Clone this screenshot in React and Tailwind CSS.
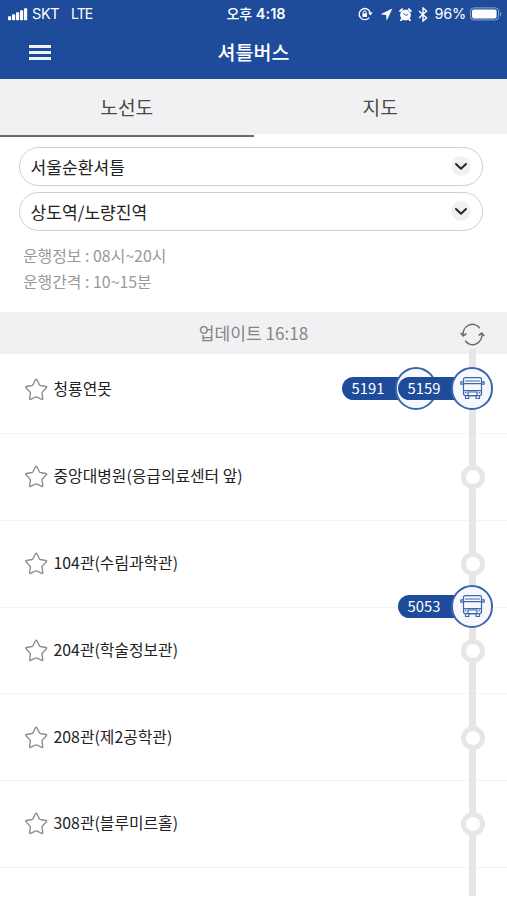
import React from "react";

const stops = [
  "청룡연못",
  "중앙대병원(응급의료센터 앞)",
  "104관(수림과학관)",
  "204관(학술정보관)",
  "208관(제2공학관)",
  "308관(블루미르홀)",
];

function StatusBar() {
  return (
    <div className="grid h-[28px] grid-cols-[1fr_auto_1fr] items-center pl-2 pr-[5px] font-['Inter','Noto_Sans_CJK_KR',sans-serif] text-white">
      <div className="flex items-center text-[14px] leading-[20px]">
        <svg width="20" height="13" viewBox="0 0 20 13" fill="currentColor">
          <rect x="0" y="8.3" width="3.2" height="4" rx="0.8" />
          <rect x="4" y="6.3" width="3.2" height="6" rx="0.8" />
          <rect x="8" y="4.3" width="3.2" height="8" rx="0.8" />
          <rect x="12" y="2.3" width="3.2" height="10" rx="0.8" />
          <rect x="16" y="0.3" width="3.2" height="12" rx="0.8" />
        </svg>
        <span className="ml-1 w-[39px] text-[14.5px] tracking-[-0.4px]">SKT</span>
        <span className="text-[14px] tracking-[-0.9px]">LTE</span>
      </div>
      <div className="pl-[2px] text-[14.5px] font-semibold leading-[20px]">
        <span className="text-[14px] font-medium">오후</span> 4:18
      </div>
      <div className="flex items-center justify-end leading-[20px]">
        <svg width="15" height="14" viewBox="0 0 15 14" fill="none" stroke="currentColor" strokeWidth="1.3">
          <path d="M11.2 10.6A5.6 5.6 0 1 1 12.3 6" />
          <path d="M10.1 5.6h4.5l-2.2 3z" fill="currentColor" stroke="none" />
          <rect x="4.4" y="6.3" width="4.6" height="3.6" fill="currentColor" stroke="none" />
          <path d="M5.3 6.5V5.2a1.4 1.4 0 0 1 2.8 0v1.3" strokeWidth="1" />
        </svg>
        <svg className="ml-[7px]" width="13" height="13" viewBox="0 0 13 13" fill="currentColor">
          <path d="M12.4.5.5 6.3l5.6.6.6 5.8z" />
        </svg>
        <svg className="ml-[6px]" width="13" height="13" viewBox="0 0 13 13">
          <circle cx="6.5" cy="7" r="5.4" fill="currentColor" />
          <path d="M1.1 3.1 3.1 1.2M11.9 3.1 9.9 1.2M3 11l-1 1.3M10 11l1 1.3" stroke="currentColor" strokeWidth="1.9" strokeLinecap="round" />
          <path d="m4.2 5.2 2.4 2 2.4-.6" stroke="#1e4c9a" strokeWidth="0.9" fill="none" />
        </svg>
        <svg className="ml-[6px]" width="10" height="15" viewBox="0 0 10 15" fill="none" stroke="currentColor" strokeWidth="1.4">
          <path d="m1 4 7.6 7L5 14V1l3.6 3L1 11" />
        </svg>
        <span className="ml-[6px] text-[14.5px] tracking-[-0.2px]">96%</span>
        <svg className="ml-[4px]" width="32" height="14" viewBox="0 0 32 14">
          <rect x="0.6" y="0.9" width="28" height="12" rx="3.2" fill="none" stroke="#8fa9d2" strokeWidth="1" />
          <rect x="2" y="2.4" width="24.6" height="9" rx="1.8" fill="white" />
          <path d="M30 4.8c1.5.6 1.5 3.8 0 4.4z" fill="#8fa9d2" />
        </svg>
      </div>
    </div>
  );
}

function Select({ label }) {
  return (
    <div className="flex h-[39px] items-center justify-between rounded-full border border-[#cfcfcf] pl-[10.5px] pr-[11.5px] text-[17.1px] leading-[24px] text-[#222]">
      <span className="pt-[1px]">{label}</span>
      <span className="mb-px flex h-5 w-5 items-center justify-center rounded-full bg-[#f1f1f1]">
        <svg width="14" height="9" viewBox="0 0 14 9" fill="none" stroke="#2b2b2b" strokeWidth="2.1" strokeLinecap="round" strokeLinejoin="round">
          <path d="M2 2l5 4.7L12 2" />
        </svg>
      </span>
    </div>
  );
}

function Star() {
  return (
    <svg className="mb-[2px]" width="24" height="24" viewBox="0 0 24 24" fill="none" stroke="#8e8e8e" strokeWidth="1.4" strokeLinejoin="round">
      <path d="M11.5 2.8q.7-1.3 1.4 0l2.5 4.9q.3.6 1 .8l5.5 1q1.3.3.4 1.3l-3.9 4.3q-.5.5-.4 1.2l.8 5.3q.1 1.2-1 .7l-4.7-2.2q-.9-.4-1.800 0l-4.700 2.200q-1.100.5-1-.7l.8-5.300q.1-.7-.4-1.200l-3.900-4.300q-.9-1 .4-1.300l5.500-1q.7-.2 1-.8z" />
    </svg>
  );
}

function BusMarker() {
  return (
    <div className="flex h-[43px] w-[42px] items-center justify-center rounded-full border-2 border-[#3a66af] bg-[#f7f8fc]">
      <svg width="25" height="23" viewBox="0 0 25 23" fill="none" stroke="#3c66ae" strokeWidth="1.2" strokeLinejoin="round">
        <path d="M3.5 2.4q0-1.800 1.800-1.800h14.400q1.800 0 1.800 1.800V16.500q0 2.200-2 2.200h-14q-2 0-2-2.200z" />
        <path d="M5 4h15M3.5 6.600h18M3.500 13.600h18" />
        <path d="M3.500 4.800H.8v2.400h2.700M21.500 4.800h2.700v2.400h-2.700" />
        <rect x="8" y="15" width="9" height="3.700" />
        <path d="M4.800 15.700h1.500M18.700 15.700h1.500M5.500 18.700v2.800h3.400v-2.800M16.100 18.700v2.800h3.400v-2.800" />
      </svg>
    </div>
  );
}

function BusTag({ number }) {
  return (
    <div className="flex items-center">
      <span className="-mr-[3px] h-[23px] w-[56px] rounded-l-full bg-[#1e4c9a] pl-[9.5px] text-[14.8px] leading-[22px] text-white">
        {number}
      </span>
      <BusMarker />
    </div>
  );
}

export default function App() {
  return (
    <div className="h-[900px] w-[507px] overflow-hidden bg-white font-['Noto_Sans_CJK_KR',sans-serif]">
      <header className="h-[79px] bg-[#1e4c9a] text-white">
        <StatusBar />
        <div className="grid h-[48px] grid-cols-[1fr_auto_1fr] items-center">
          <div className="ml-[29px] flex w-[22px] flex-col gap-[3px]">
            <span className="h-[3px] bg-[#eef2f9]" />
            <span className="h-[3px] bg-[#eef2f9]" />
            <span className="h-[3px] bg-[#eef2f9]" />
          </div>
          <h1 className="pb-px text-[19.5px] font-medium leading-[28px]">셔틀버스</h1>
        </div>
      </header>

      <nav className="grid h-[57px] grid-cols-2 text-center text-[19.2px] leading-[56px] text-[#4a4a4a]">
        <div className="border-b-2 border-[#6c6c6e] bg-[#f1f1f3]">노선도</div>
        <div className="h-[55px] bg-[#f1f1f3]">지도</div>
      </nav>

      <section className="flex h-[176px] flex-col gap-[6px] pl-[19px] pr-6 pt-[11px]">
        <Select label="서울순환셔틀" />
        <Select label="상도역/노량진역" />
        <div className="pl-1 pt-[6px] text-[15.9px] leading-[26px] text-[#999]">
          <p>운행정보 : 08시~20시</p>
          <p>운행간격 : 10~15분</p>
        </div>
      </section>

      <main className="relative">
        <div className="flex h-[42px] items-center justify-center bg-[#f1f1f3] text-[17.1px] leading-[24px] text-[#858585]">
          <span>업데이트 16:18</span>
        </div>
        <div className="absolute left-[469px] top-[37px] h-[547px] w-[7px] bg-[#e6e6e6]" />
        <svg className="absolute left-[460px] top-[11px]" width="25" height="23" viewBox="0 0 25 23" fill="none" stroke="#6b6b6b" strokeWidth="1.6">
          <path d="M3.2 12.5A9.3 9.8 0 0 1 19.8 5.2M21.8 10.5A9.3 9.8 0 0 1 5.2 17.8" />
          <path d="m.7 10 2.5 3 3.2-2.3M24.3 13l-2.5-3-3.200 2.300" />
        </svg>

        <ul>
          {stops.map((name, i) => (
            <li
              key={name}
              className={
                "flex items-center border-b border-[#f3f3f3] pl-6 pr-[22.5px] " +
                (i === 0 ? "h-[80px] pb-[8px]" : "h-[86.75px] pt-px")
              }
            >
              <Star />
              <span className="ml-[5.5px] flex-1 pb-[2px] text-[15.85px] leading-[22px] text-[#222]">{name}</span>
              {i > 0 && (
                <span className="relative h-6 w-6 rounded-full border-[5px] border-[#e6e6e6] bg-white" />
              )}
            </li>
          ))}
        </ul>

        <div className="absolute right-[70px] top-[55px]">
          <BusTag number="5191" />
        </div>
        <div className="absolute right-[14px] top-[55px]">
          <BusTag number="5159" />
        </div>
        <div className="absolute right-[14px] top-[273px]">
          <BusTag number="5053" />
        </div>
      </main>
    </div>
  );
}
